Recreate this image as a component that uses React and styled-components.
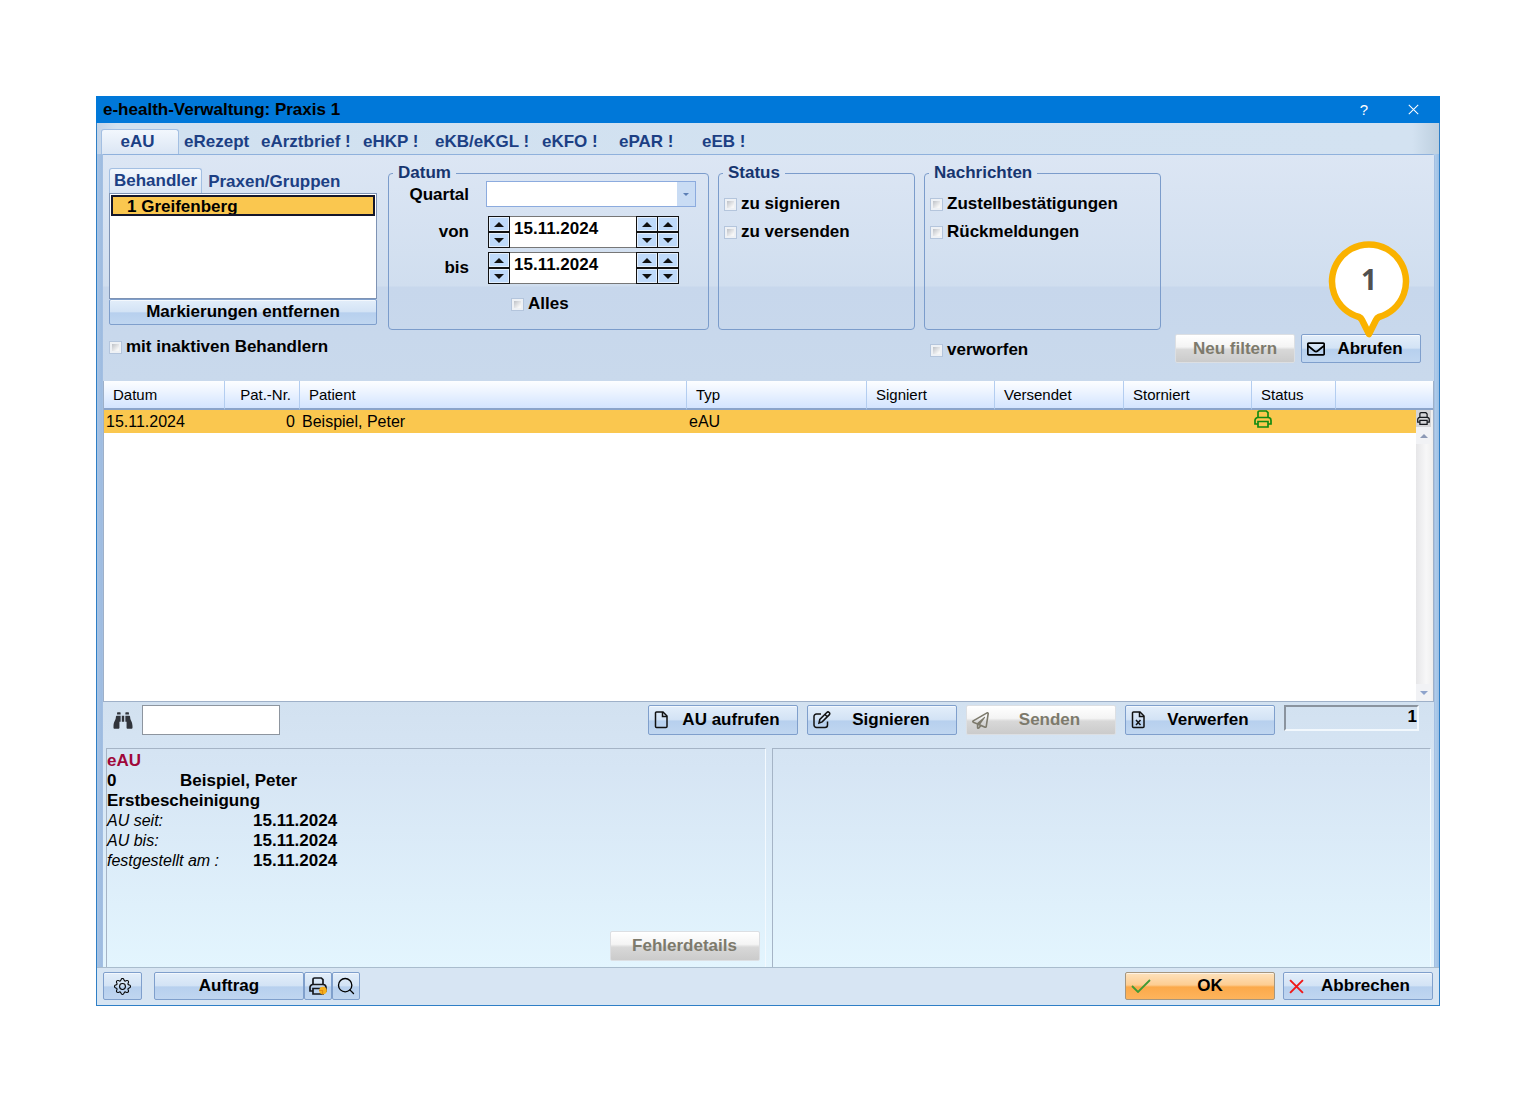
import React, { useState } from "react";
import styled, { createGlobalStyle, css } from "styled-components";
import { FaBinoculars, FaRegEnvelope, FaRegPaperPlane } from "react-icons/fa";
import { BsGear } from "react-icons/bs";
import { Search } from "lucide-react";

const GlobalStyle = createGlobalStyle`
  * {
    box-sizing: border-box;
  }
  body {
    margin: 0;
    background: #fff;
    color: #000;
    font: bold 17px/20px "Liberation Sans", Arial, sans-serif;
  }
  button, input, select {
    font: inherit;
    color: inherit;
  }
`;

const Page = styled.div`
  padding: 96px;
`;

const Dialog = styled.section`
  display: flex;
  flex-direction: column;
  border: 1px solid #2f7fc6;
  border-top: 0;
  background: linear-gradient(270deg, #9dbfe4, #b5d0ec 5px, transparent 6px),
    linear-gradient(90deg, #a9c4e4, #9dbbe0 5px, #d3e2f0 6px);
`;

const TitleBar = styled.header`
  display: flex;
  align-items: center;
  height: 27px;
  margin: 0 -1px;
  padding: 0 20px 0 7px;
  background: #0078d9;
`;

const Title = styled.h1`
  flex: 1;
  margin: 0;
  font-size: 17px;
  line-height: 20px;
`;

const TitleButton = styled.button`
  width: 14px;
  height: 20px;
  margin-left: 35px;
  padding: 0;
  border: 0;
  background: none;
  color: #fff;
  font-weight: normal;
  font-size: 15px;
  line-height: 20px;
`;

const Tabs = styled.nav`
  display: flex;
  align-items: flex-end;
  height: 31px;
  padding-left: 4px;
  background: linear-gradient(90deg, #c3d4e8, #d1e1f0 20px, #d3e2f1 98%, #bdcfdf);
`;

const Tab = styled.button`
  flex: none;
  width: ${(p) => p.$width}px;
  height: 25px;
  padding: 0 0 0 5px;
  border: 0;
  background: none;
  color: #1c3f84;
  text-align: left;
  line-height: 26px;
  white-space: nowrap;
  ${(p) =>
    p.$active &&
    css`
      padding: 0 5px 0 0;
      border: 1px solid #a3bfe2;
      border-bottom: 0;
      border-radius: 3px 3px 0 0;
      background: linear-gradient(#f2f7fd, #dbe6f4);
      text-align: center;
      line-height: 24px;
    `}
`;

const Pane = styled.div`
  margin: 0 4px 0 5px;
  border: 1px solid #a3bfe2;
  border-top-color: #8fb1dc;
  border-bottom: 0;
  border-radius: 0 3px 0 0;
`;

const Filters = styled.div`
  display: grid;
  grid-template-columns: 270px 321px 197px 237px 1fr;
  grid-template-rows: 165px 1fr;
  column-gap: 9px;
  height: 226px;
  padding: 10px 13px 0 6px;
  background: linear-gradient(#dce6f4, #d0deef 131px, #c7d7ec 132px, #c9d9ec);
`;

const Doctors = styled.div`
  grid-row: 1 / 3;
  padding: 3px 2px 0 0;
`;

const ListBox = styled.ul`
  height: 106px;
  margin: 0;
  padding: 1px;
  border: 1px solid #7e93b4;
  background: #fff;
  list-style: none;
`;

const ListItem = styled.li`
  height: 21px;
  padding-left: 14px;
  border: 2px solid #15172b;
  background: #fac74f;
  overflow: hidden;
  line-height: 20px;
`;

const buttonLooks = {
  normal: css`
    border-color: #7f9fcc;
    background: linear-gradient(#e3eefa, #d3e3f5 48%, #b7d0ee 54%, #c0d6f0);
  `,
  disabled: css`
    border-color: #dcdfe3;
    background: linear-gradient(#fff, #f4f4f4 44%, #d8d8d8 54%, #cbcbcb);
    color: #7d7a6c;
  `,
  primary: css`
    border-color: #a5967f;
    background: linear-gradient(#fde2bd, #fdcd92 46%, #fba94a 54%, #fdb45c);
  `,
};

const PushButton = styled.button`
  display: flex;
  align-items: center;
  justify-content: center;
  flex: none;
  width: ${(p) => p.$width || "150px"};
  height: ${(p) => p.$height || 30}px;
  padding: 0 5px;
  border: 1px solid;
  border-radius: 2px;
  box-shadow: inset 0 1px 0 rgba(255, 255, 255, 0.6);
  white-space: nowrap;
  ${(p) => buttonLooks[p.$look || "normal"]}
  svg {
    flex: none;
  }
`;

const ButtonText = styled.span`
  flex: 1;
  text-align: center;
`;

const Check = styled.label`
  display: flex;
  align-items: center;
  gap: 4px;
  height: 28px;
  white-space: nowrap;
  input {
    appearance: none;
    width: 13px;
    height: 13px;
    margin: 0;
    border: 1px solid #b4c5dc;
    background: linear-gradient(135deg, #a9aeb6, #f7f7f7 70%);
    box-shadow: inset 0 0 0 2px #eef1f5;
  }
  input:checked {
    background: #3b6db5;
  }
`;

const Group = styled.fieldset`
  min-width: 0;
  margin: 0;
  padding: ${(p) => p.$pad || "9px 5px 0"};
  border: 1px solid #7b9ccb;
  border-radius: 4px;
  legend {
    margin-left: ${(p) => (p.$pad ? 4 : -1)}px;
    padding: 0 5px;
    color: #17356f;
    line-height: 16px;
  }
`;

const Field = styled.div`
  display: grid;
  grid-template-columns: 80px 1fr;
  column-gap: 17px;
  align-items: ${(p) => (p.$top ? "start" : "center")};
  height: ${(p) => (p.$top ? 33 : 36)}px;
  > label {
    text-align: right;
    line-height: 28px;
  }
`;

const SelectBox = styled.div`
  display: flex;
  width: 210px;
  height: 26px;
  border: 1px solid #8cabde;
  background: #fff;
  select {
    flex: 1;
    min-width: 0;
    appearance: none;
    border: 0;
    background: linear-gradient(90deg, transparent 190px, #c9dcf4 190px);
  }
  svg {
    flex: none;
    align-self: center;
    margin-left: -12px;
    margin-right: 6px;
    pointer-events: none;
  }
`;

const DateBox = styled.div`
  display: flex;
  width: 191px;
  height: 32px;
  margin-left: 2px;
  border: 1px solid #777;
  background: #fff;
  input {
    flex: 1;
    min-width: 0;
    height: 24px;
    padding: 0 4px;
    border: 0;
    background: none;
  }
`;

const Stepper = styled.span`
  display: grid;
  grid-template-rows: 1fr 1fr;
  width: 22px;
  margin: -1px ${(p) => (p.$last ? -1 : 0)}px -1px -1px;
  border: 1px solid #111;
  background: #111;
  row-gap: 2px;
  button {
    display: flex;
    align-items: center;
    justify-content: center;
    padding: 0;
    border: 1px solid #e4effc;
    background: #bfdafa;
  }
`;

const AllDates = styled.div`
  padding: 4px 0 0 122px;
`;

const Discarded = styled.div`
  grid-column: 4;
  padding: 6px 0 0 6px;
`;

const FetchArea = styled.div`
  grid-column: 5;
  position: relative;
  display: flex;
  align-items: flex-start;
  justify-content: flex-end;
  gap: 6px;
  padding-top: 4px;
`;

const Pin = styled.svg`
  position: absolute;
  right: 11px;
  bottom: 43px;
  width: 82px;
  height: 98px;
`;

const Messages = styled.table`
  width: 100%;
  border-collapse: separate;
  border-spacing: 0;
  table-layout: fixed;
  border: 1px solid #9eb0c8;
  border-top: 0;
  background: #fff;
  font-weight: normal;
  font-size: 16px;
`;

const HeadCell = styled.th`
  width: ${(p) => (p.$width ? `${p.$width}px` : "auto")};
  height: 29px;
  padding: 0 8px 0 9px;
  border-right: ${(p) => (p.$last ? 0 : "1px solid #b3cdf0")};
  border-bottom: 2px solid #8ba4ca;
  background: linear-gradient(#fdfeff, #e8f1ff 50%, #d3e4ff);
  font-weight: normal;
  font-size: 15px;
  text-align: ${(p) => p.$align || "left"};
`;

const Cell = styled.td`
  height: 23px;
  padding: 0 5px 0 2px;
  background: #fac74f;
  text-align: ${(p) => p.$align || "left"};
  vertical-align: ${(p) => p.$valign || "middle"};
  svg {
    display: block;
  }
`;

const EmptyCell = styled.td`
  height: 268px;
  padding: 0;
`;

const ScrollCell = styled.td`
  height: 1px;
  padding: 0;
`;

const ScrollBar = styled.div`
  display: flex;
  flex-direction: column;
  justify-content: space-between;
  height: 100%;
  background: linear-gradient(90deg, #e6e6e8, #f7f7f8 60%, #eee);
`;

const ScrollButton = styled.button`
  display: flex;
  align-items: center;
  justify-content: center;
  width: 15px;
  height: 17px;
  padding: 0;
  border: 0;
  background: ${(p) => (p.$print ? "#d5d5d8" : "#f1f2f5")};
`;

const Lower = styled.div`
  background: linear-gradient(#d2e1f0, #d6e5f4 25%, #e3f5fe);
`;

const Toolbar = styled.div`
  display: flex;
  align-items: flex-start;
  gap: 9px;
  height: 46px;
  padding: 3px 15px 0 9px;
`;

const Find = styled.label`
  display: flex;
  align-items: center;
  flex: 1;
  gap: 8px;
  svg {
    width: 22px;
    height: 19px;
    color: #30343b;
  }
  input {
    width: 138px;
    height: 30px;
    border: 1px solid #8d959f;
    background: #fff;
  }
`;

const Count = styled.output`
  width: 135px;
  height: 26px;
  border: 2px solid;
  border-color: #8a939e #f2f8fd #f2f8fd #8a939e;
  text-align: right;
`;

const Details = styled.div`
  display: grid;
  grid-template-columns: 1fr 1fr;
  gap: 6px;
  padding: 0 3px 0 3px;
`;

const DetailPane = styled.article`
  display: flex;
  flex-direction: column;
  justify-content: space-between;
  min-height: 219px;
  padding: 2px 5px 6px 0;
  border: 1px solid #a5b4c6;
  border-right-color: #f3f9fe;
  border-bottom: 0;
`;

const Line = styled.div`
  display: flex;
  color: ${(p) => (p.$heading ? "#a0083a" : "inherit")};
`;

const Caption = styled.span`
  width: ${(p) => p.$width}px;
  ${(p) =>
    p.$italic &&
    css`
      font-size: 16px;
      font-weight: normal;
      font-style: italic;
    `}
`;

const DetailActions = styled.div`
  display: flex;
  justify-content: flex-end;
`;

const Footer = styled.footer`
  display: flex;
  height: 38px;
  padding: 4px 6px 0;
  border-top: 1px solid #a9bccd;
  background: #d7e5f3;
`;

const ActionGroup = styled.div`
  display: flex;
  gap: ${(p) => p.$gap || 0}px;
  margin-left: ${(p) => p.$left || "12px"};
`;

const SubTabs = styled.div`
  display: flex;
  height: 25px;
`;

const SubTab = styled.button`
  padding: ${(p) => (p.$active ? "0 4px" : "3px 6px 0")};
  border: ${(p) => (p.$active ? "1px solid #a3bfe2" : "0")};
  border-bottom: 0;
  border-radius: 3px 3px 0 0;
  background: ${(p) => (p.$active ? "linear-gradient(#f2f7fd, #dbe6f4)" : "none")};
  color: #1c3f84;
`;

const CheckRow = styled.div`
  padding: 8px 0 0;
`;

const Triangle = ({ down, color = "#111", size = 10 }) => (
  <svg width={size} height={size / 2} viewBox="0 0 8 4" fill={color}>
    <path d={down ? "M0 0h8L4 4z" : "M0 4h8L4 0z"} />
  </svg>
);

const PrinterIcon = ({ size = 18, color = "#16181d", badge }) => (
  <svg width={size} height={size} viewBox="0 0 18 18" fill="none" stroke={color} strokeWidth="1.7">
    <path d="M4 7V2.5A1.5 1.5 0 0 1 5.500 1h6.800L14 2.700V7" />
    <path d="M4 14H1v-3.500A3 3 0 0 1 4 7.500h10a3 3 0 0 1 3 3V14h-3" />
    <path d="M4 11.500h10V17H4z" />
    {badge && <circle cx="14" cy="13.500" r="3.800" fill="#f6b01c" stroke="none" />}
    {badge && <path d="M10 13.500h3.500v4" stroke="#e08a10" strokeWidth="1.200" />}
  </svg>
);

const FileIcon = ({ crossed }) => (
  <svg width="16" height="18" viewBox="0 0 16 18" fill="none" stroke="#111" strokeWidth="1.5">
    <path d="M2.500 1h6.500L13 5v10.500a1 1 0 0 1-1 1H2.500a1 1 0 0 1-1-1V2a1 1 0 0 1 1-1z" />
    <path d="M8.500 1v4.500H13" />
    {crossed && <path d="M5 9l4.500 5M9.500 9L5 14" />}
  </svg>
);

const SignIcon = () => (
  <svg width="18" height="18" viewBox="0 0 18 18" fill="none" stroke="#111" strokeWidth="1.5">
    <path d="M8 3H3.500A2.500 2.500 0 0 0 1 5.500v8.500a2.500 2.500 0 0 0 2.500 2.500H12a2.500 2.500 0 0 0 2.500-2.500v-3.500" />
    <path d="M6 12l.8-3.500 7-7a1.600 1.600 0 0 1 2.400 2.400l-7 7zM12 3.500l2.500 2.500" />
  </svg>
);

const CheckIcon = () => (
  <svg width="20" height="14" viewBox="0 0 20 14" fill="none" stroke="#3f9a35" strokeWidth="1.8">
    <path d="M1 7l6 6L19 1" />
  </svg>
);

const CrossIcon = ({ size = 15, color = "#f01818", width = 1.8 }) => (
  <svg width={size} height={size} viewBox="0 0 14 14" fill="none" stroke={color} strokeWidth={width}>
    <path d="M1 1l12 12M13 1L1 13" />
  </svg>
);

const tabs = [
  ["eAU", 78],
  ["eRezept", 77],
  ["eArztbrief !", 102],
  ["eHKP !", 72],
  ["eKB/eKGL !", 107],
  ["eKFO !", 77],
  ["ePAR !", 83],
  ["eEB !", 60],
];

const columns = [
  ["Datum", 121],
  ["Pat.-Nr.", 75, "right"],
  ["Patient"],
  ["Typ", 180],
  ["Signiert", 128],
  ["Versendet", 129],
  ["Storniert", 128],
  ["Status", 84],
];

const CheckOption = ({ label }) => (
  <Check>
    <input type="checkbox" />
    {label}
  </Check>
);

const DateStepper = ({ last, name }) => (
  <Stepper $last={last}>
    <button type="button" aria-label={`${name} +`}>
      <Triangle />
    </button>
    <button type="button" aria-label={`${name} -`}>
      <Triangle down />
    </button>
  </Stepper>
);

const DateField = ({ id, label }) => {
  const [value, setValue] = useState("15.11.2024");
  return (
    <Field>
      <label htmlFor={id}>{label}</label>
      <DateBox>
        <DateStepper name="Tag" />
        <input id={id} value={value} onChange={(e) => setValue(e.target.value)} />
        <DateStepper name="Monat" />
        <DateStepper name="Jahr" last />
      </DateBox>
    </Field>
  );
};

const IconButton = ({ icon, children, ...rest }) => (
  <PushButton type="button" disabled={rest.$look === "disabled"} {...rest}>
    {icon}
    <ButtonText>{children}</ButtonText>
  </PushButton>
);

const FilterPanel = () => (
  <Filters>
    <Doctors>
      <SubTabs>
        <SubTab type="button" $active>
          Behandler
        </SubTab>
        <SubTab type="button">Praxen/Gruppen</SubTab>
      </SubTabs>
      <ListBox>
        <ListItem>1 Greifenberg</ListItem>
      </ListBox>
      <PushButton type="button" $width="100%" $height={26}>
        Markierungen entfernen
      </PushButton>
      <CheckRow>
        <CheckOption label="mit inaktiven Behandlern" />
      </CheckRow>
    </Doctors>
    <Group $pad="0">
      <legend>Datum</legend>
      <Field $top>
        <label htmlFor="quartal">Quartal</label>
        <SelectBox>
          <select id="quartal" />
          <Triangle down size={6} color="#5c7fb5" />
        </SelectBox>
      </Field>
      <DateField id="von" label="von" />
      <DateField id="bis" label="bis" />
      <AllDates>
        <CheckOption label="Alles" />
      </AllDates>
    </Group>
    <Group>
      <legend>Status</legend>
      <CheckOption label="zu signieren" />
      <CheckOption label="zu versenden" />
    </Group>
    <Group>
      <legend>Nachrichten</legend>
      <CheckOption label="Zustellbestätigungen" />
      <CheckOption label="Rückmeldungen" />
    </Group>
    <Discarded>
      <CheckOption label="verworfen" />
    </Discarded>
    <FetchArea>
      <PushButton type="button" disabled $look="disabled" $width="120px" $height={29}>
        Neu filtern
      </PushButton>
      <IconButton icon={<FaRegEnvelope size={18} />} $width="120px" $height={29}>
        Abrufen
      </IconButton>
      <Pin viewBox="0 0 82 98">
        <path
          d="M31 77A37 37 0 1 1 51 77Q49 78 48 80L41 94L34 80Q33 78 31 77z"
          fill="#fff"
          stroke="#fab200"
          strokeWidth="6.500"
          strokeLinejoin="round"
        />
        <text
          x="41"
          y="50"
          textAnchor="middle"
          fill="#505050"
          fontFamily="Noto Sans, sans-serif"
          fontSize="28"
          fontWeight="700"
        >
          1
        </text>
      </Pin>
    </FetchArea>
  </Filters>
);

const MessageTable = () => (
  <Messages>
    <thead>
      <tr>
        {columns.map(([name, width, align]) => (
          <HeadCell key={name} $width={width} $align={align}>
            {name}
          </HeadCell>
        ))}
        <HeadCell $width={80} $last />
        <HeadCell $width={15} $last />
      </tr>
    </thead>
    <tbody>
      <tr>
        <Cell>15.11.2024</Cell>
        <Cell $align="right">0</Cell>
        <Cell>Beispiel, Peter</Cell>
        <Cell>eAU</Cell>
        <Cell />
        <Cell />
        <Cell />
        <Cell $valign="top">
          <PrinterIcon color="#128a12" />
        </Cell>
        <Cell />
        <ScrollCell rowSpan={2}>
          <ScrollBar>
            <span>
              <ScrollButton type="button" aria-label="Liste drucken" $print>
                <PrinterIcon size={13} />
              </ScrollButton>
              <ScrollButton type="button" aria-label="Nach oben">
                <Triangle color="#8c99b5" size={8} />
              </ScrollButton>
            </span>
            <ScrollButton type="button" aria-label="Nach unten">
              <Triangle down color="#8ea3cc" size={8} />
            </ScrollButton>
          </ScrollBar>
        </ScrollCell>
      </tr>
      <tr>
        <EmptyCell colSpan={9} />
      </tr>
    </tbody>
  </Messages>
);

const App = () => (
  <>
    <GlobalStyle />
    <Page>
      <Dialog>
        <TitleBar>
          <Title>e-health-Verwaltung: Praxis 1</Title>
          <TitleButton type="button">?</TitleButton>
          <TitleButton type="button" aria-label="Schließen">
            <CrossIcon size={11} color="#fff" width={1.3} />
          </TitleButton>
        </TitleBar>
        <Tabs>
          {tabs.map(([name, width], i) => (
            <Tab key={name} type="button" $width={width} $active={i === 0}>
              {name}
            </Tab>
          ))}
        </Tabs>
        <Pane>
          <FilterPanel />
          <MessageTable />
          <Lower>
            <Toolbar>
              <Find>
                <FaBinoculars />
                <input type="text" aria-label="Suchen" />
              </Find>
              <IconButton icon={<FileIcon />}>AU aufrufen</IconButton>
              <IconButton icon={<SignIcon />}>Signieren</IconButton>
              <IconButton icon={<FaRegPaperPlane size={17} />} $look="disabled">
                Senden
              </IconButton>
              <IconButton icon={<FileIcon crossed />}>Verwerfen</IconButton>
              <Count>1</Count>
            </Toolbar>
            <Details>
              <DetailPane>
                <div>
                  <Line $heading>eAU</Line>
                  <Line>
                    <Caption $width={73}>0</Caption>
                    Beispiel, Peter
                  </Line>
                  <Line>Erstbescheinigung</Line>
                  {["AU seit:", "AU bis:", "festgestellt am :"].map((caption) => (
                    <Line key={caption}>
                      <Caption $width={146} $italic>
                        {caption}
                      </Caption>
                      15.11.2024
                    </Line>
                  ))}
                </div>
                <DetailActions>
                  <PushButton type="button" disabled $look="disabled">
                    Fehlerdetails
                  </PushButton>
                </DetailActions>
              </DetailPane>
              <DetailPane />
            </Details>
          </Lower>
        </Pane>
        <Footer>
          <PushButton type="button" aria-label="Einstellungen" $width="39px" $height={28}>
            <BsGear size={17} />
          </PushButton>
          <ActionGroup>
            <PushButton type="button" $height={28}>
              Auftrag
            </PushButton>
            <PushButton type="button" aria-label="Drucken" $width="28px" $height={28}>
              <PrinterIcon badge />
            </PushButton>
            <PushButton type="button" aria-label="Vorschau" $width="28px" $height={28}>
              <Search size={20} strokeWidth={1.6} />
            </PushButton>
          </ActionGroup>
          <ActionGroup $left="auto" $gap={8}>
            <IconButton icon={<CheckIcon />} $look="primary" $height={28}>
              OK
            </IconButton>
            <IconButton icon={<CrossIcon />} $height={28}>
              Abbrechen
            </IconButton>
          </ActionGroup>
        </Footer>
      </Dialog>
    </Page>
  </>
);

export default App;
